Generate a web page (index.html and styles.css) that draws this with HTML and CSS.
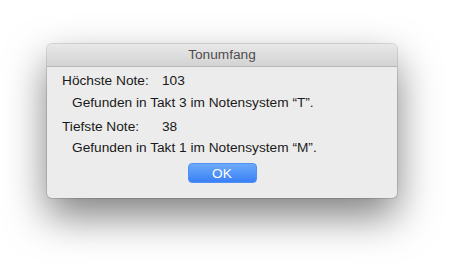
FILE: index.html
```html
<!DOCTYPE html>
<html>
  <head>
    <meta charset="UTF-8" />
    <title>Tonumfang</title>
    <link rel="stylesheet" href="styles.css">
  </head>
  <body>
    <div class="window">
      <div class="titlebar">Tonumfang</div>
      <div class="content">
        <div class="row">
          <span class="label">Höchste Note:</span>
          <span class="value">103</span>
        </div>
        <div class="found">Gefunden in Takt 3 im Notensystem “T”.</div>
        <div class="row second">
          <span class="label">Tiefste Note:</span>
          <span class="value">38</span>
        </div>
        <div class="found">Gefunden in Takt 1 im Notensystem “M”.</div>
        <div class="buttons">
          <button class="ok">OK</button>
        </div>
      </div>
    </div>
  </body>
</html>
```
FILE: styles.css
```css
html,
body {
  margin: 0;
  height: 100%;
  background: #fff;
}

body {
  font-family: "Liberation Sans", Arial, sans-serif;
  font-size: 13.7px;
  color: #1a1a1a;
  padding: 44px 0 0 47px;
  box-sizing: border-box;
}

.window {
  width: 350px;
  height: 154px;
  background: #ececec;
  border-radius: 5px;
  box-shadow: 0 0 0 1px rgba(0, 0, 0, 0.12), 0 18px 40px rgba(0, 0, 0, 0.5);
  overflow: hidden;
  display: flex;
  flex-direction: column;
}

.titlebar {
  height: 22px;
  line-height: 22px;
  text-align: center;
  color: #4d4d4d;
  background: linear-gradient(#e9e8e9, #d4d3d4);
  border-bottom: 1px solid #b8b8b8;
}

.content {
  padding: 6px 0 0 15px;
}

.row {
  display: flex;
  height: 16px;
  line-height: 16px;
}

.row.second {
  margin-top: 8px;
}

.label {
  width: 100px;
}

.found {
  padding-left: 10px;
  margin-top: 6px;
  height: 16px;
  line-height: 16px;
}

.row.second + .found {
  margin-top: 5px;
}

.buttons {
  display: flex;
  justify-content: center;
  padding-right: 15px;
  margin-top: 7px;
}

.ok {
  width: 69px;
  height: 20px;
  border: 1px solid #4f8ff6;
  border-radius: 4px;
  background: linear-gradient(#6caaf9, #3a80f6);
  color: #fff;
  font: 13.7px "Liberation Sans", Arial, sans-serif;
  padding: 0;
}
```
